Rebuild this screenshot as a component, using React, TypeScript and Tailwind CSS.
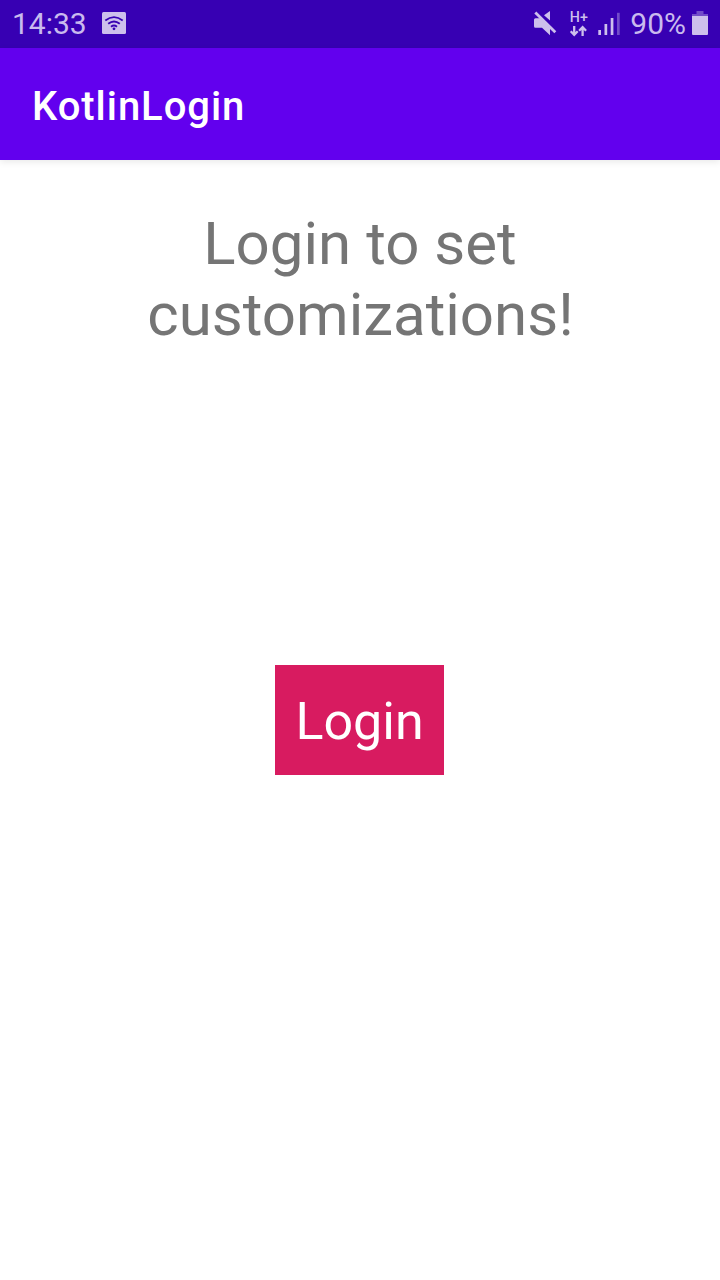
export default function App() {
  return (
    <div className="flex h-[1280px] w-[720px] flex-col overflow-hidden bg-white font-['Roboto',sans-serif]">
      <header className="flex h-12 shrink-0 items-center bg-[#3700b3] pr-3 pl-3 text-[30px] leading-none text-[#c9baee]">
        <span className="w-[90px]">14:33</span>
        <svg className="-mt-0.5" width="24" height="22" viewBox="0 0 24 22" fill="none">
          <rect width="24" height="22" rx="1.500" fill="#cdbfec" />
          <path d="M3.300 8.500Q12 1.800 20.700 8.500M6.200 11.800Q12 7.200 17.800 11.800M9 14.700Q12 12.200 15 14.700" stroke="#3700b3" strokeWidth="1.800" />
          <circle cx="12" cy="16.800" r="1.400" fill="#3700b3" />
        </svg>
        <div className="ml-auto flex items-center">
          <svg width="90" height="28" viewBox="532 10 90 28" fill="#cdbfec">
            <path d="M550 11v9.500L544 15.200z" />
            <path d="M535.500 18.300h5L550 27.500v7.800L542 27.700h-6.500q-1.500 0-1.500-1.500V19.800q0-1.500 1.500-1.500z" />
            <path d="M535.300 12.600L555.300 32.300" stroke="#cdbfec" strokeWidth="2.800" />
            <text x="569.800" y="22.300" fontSize="14" fontWeight="500" textLength="18" lengthAdjust="spacingAndGlyphs">H+</text>
            <path d="M574.200 26v8M570.700 31.300l3.500 3.500 3.500-3.500M582.600 36v-8M579.100 30.700l3.500-3.500 3.500 3.500" fill="none" stroke="#cdbfec" strokeWidth="2.300" />
            <path d="M598.300 30h2.700v5h-2.700zM604.500 24h2.700v11h-2.700zM610.700 18h2.700v17h-2.700z" />
            <path d="M617 12.800h2.700V35H617z" opacity="0.4" />
          </svg>
          <span className="ml-2">90%</span>
          <svg className="ml-[6px]" width="16" height="26" viewBox="0 0 16 26" fill="#cdbfec">
            <path d="M4.500 0h7v3H16v2H0V3h4.500z" opacity="0.4" />
            <path d="M0 5h16v18q0 1-1 1H1q-1 0-1-1z" />
          </svg>
        </div>
      </header>
      <div className="z-10 flex h-28 shrink-0 items-center bg-[#6200ee] px-8 pt-1.5 text-[40px] font-medium tracking-[0.95px] text-white shadow-[0_2px_7px_rgba(0,0,0,0.09)]">KotlinLogin</div>
      <main className="flex flex-1 flex-col items-center">
        <h1 className="mt-12 text-center text-[60px] leading-[71px] text-[#757575]">Login to set<br /><span className="pl-px">customizations!</span></h1>
        <button className="mt-[315px] mr-0.5 h-[110px] w-[169px] bg-[#d81b60] pt-1 pl-px text-[52px] text-white">Login</button>
      </main>
    </div>
  );
}
